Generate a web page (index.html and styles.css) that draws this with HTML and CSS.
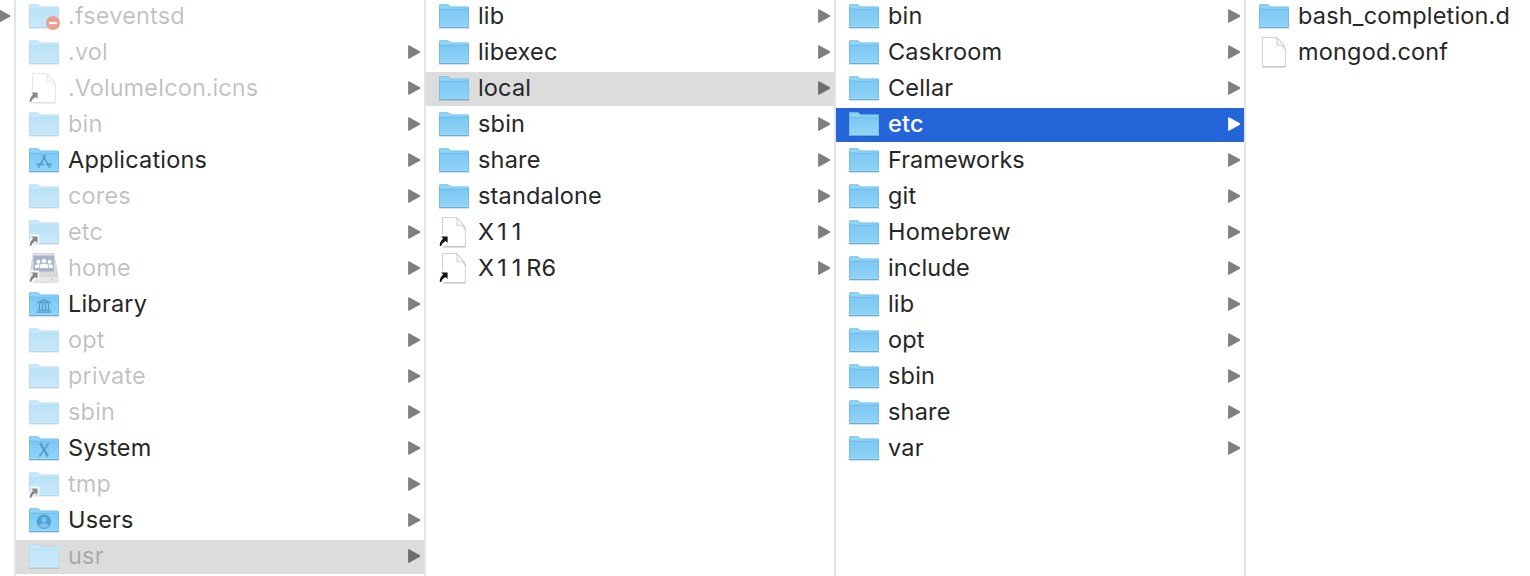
FILE: index.html
```html
<!DOCTYPE html>
<html lang="en">
<head>
<meta charset="utf-8">
<title>usr/local/etc</title>
<link rel="stylesheet" href="styles.css">
</head>
<body>
<svg class="defs" aria-hidden="true">
  <defs>
    <linearGradient id="front" x1="0" y1="0" x2="0" y2="1"><stop offset="0" stop-color="#7bc8f3"/><stop offset="1" stop-color="#92d3f8"/></linearGradient>
    <linearGradient id="drive" x1="0" y1="0" x2="0" y2="1"><stop offset="0" stop-color="#c9cacb"/><stop offset="1" stop-color="#a9abad"/></linearGradient>
    <symbol id="folder" viewBox="0 0 32 34">
      <path d="M1 28.2H31V29H1z" fill="#000" opacity=".12"/>
      <path d="M1 5.2Q1 4.2 2 4.2H9.6Q10.5 4.2 11.1 5L12.3 6.5H30Q31 6.5 31 7.5V27.9H1z" fill="#91d5f7"/>
      <path d="M1 9H31V27.9H1z" fill="url(#front)"/>
      <path d="M1.5 27V5.6Q1.5 4.7 2.4 4.7H9.4Q10.2 4.7 10.8 5.5L12 7H29.6Q30.5 7 30.5 7.9V27" fill="none" stroke="#62afe0" stroke-opacity=".5"/>
      <path d="M1 9.2H31" stroke="#64b4df" stroke-width=".8" opacity=".7"/>
      <path d="M1 26.5H31" stroke="#a2dafa" opacity=".7"/>
      <path d="M1 27.6H31" stroke="#5aa6cf" stroke-width=".9"/>
    </symbol>
    <symbol id="veil" viewBox="0 0 32 34">
      <path d="M1 5.2Q1 4.2 2 4.2H9.6Q10.5 4.2 11.1 5L12.3 6.5H30Q31 6.5 31 7.5V28H1z" fill="#fff" opacity=".52"/>
    </symbol>
    <symbol id="file" viewBox="0 0 32 34">
      <path d="M4.5 1.5H18.3Q21 2.7 23.5 6.2Q26.6 9.5 27.4 13.5V30.5H4.5z" fill="#fff" stroke="#d0d0d0"/>
      <path d="M4.2 31H27.7" stroke="#b5b5b5" stroke-width=".8"/>
      <path d="M18 1.5Q20 4 18.7 9.3Q24.5 8.4 27.4 13.5Q25.8 7.5 18 1.5z" fill="#f6f6f6" stroke="#c4c4c4" stroke-width=".8"/>
    </symbol>
    <symbol id="alias" viewBox="0 0 32 34">
      <path d="M3 19.5H10.2V27L7.6 25Q4.8 27 3.6 31.5L1 29.8Q1.2 25.5 5 22z" fill="#fff" stroke="#fff" stroke-width="2" stroke-linejoin="round"/>
      <path d="M3.2 20.5H9.6V26.9L7.6 25Q4 26.6 2.9 30.3L1.7 29.5Q1.7 25.5 5.2 22.5z" fill="#111318"/>
    </symbol>
    <symbol id="apps" viewBox="0 0 32 34">
      <g fill="none" stroke="#4f9fd2" stroke-width="1.6" stroke-linecap="round"><path d="M17.2 11.7L10.6 23.3M15 11.7L21.7 23.3M9 20.4H15.2M18.8 20.4H23.3"/></g>
    </symbol>
    <symbol id="library" viewBox="0 0 32 34">
      <path d="M9.3 14.2L16 10.7L22.7 14.2V15.5H9.3z" fill="#559fcf"/>
      <path d="M11.5 16V22M14.5 16V22M17.5 16V22M20.5 16V22" stroke="#529ecf" stroke-width="1.3"/>
      <path d="M9.5 22.4H22.5M8.7 24.1H23.3" stroke="#529ecf" stroke-width="1.1"/>
      <circle cx="16" cy="13.5" r=".8" fill="#83caf1"/>
    </symbol>
    <symbol id="system" viewBox="0 0 32 34">
      <path d="M12.2 11.2L20 24.5" stroke="#4f9fd2" stroke-width="2.4"/>
      <path d="M20.6 11.2L11.3 24.5" stroke="#4f9fd2" stroke-width="1.5"/>
    </symbol>
    <symbol id="users" viewBox="0 0 32 34">
      <circle cx="16" cy="17.8" r="7.2" fill="#4ca0d5"/>
      <circle cx="16" cy="15.7" r="2.8" fill="#7cc4ee"/>
      <path d="M10.9 22Q12.2 19.3 16 19.3T21.1 22Q19 24 16 24T10.9 22z" fill="#7cc4ee"/>
    </symbol>
    <symbol id="home" viewBox="0 0 32 34">
      <path d="M5 1.5H26L30 25V29.5Q30 30.5 29 30.5H3Q2 30.5 2 29.5V25z" fill="url(#drive)" stroke="#969696" stroke-width=".7"/>
      <path d="M2.2 25H29.8V29.5Q29.8 30.4 29 30.4H3Q2.2 30.4 2.2 29.5z" fill="#d0d1d1"/>
      <path d="M5.5 3.5H26V17.5Q26 19.6 24 19.6H7.5Q5.5 19.6 5.5 17.5z" fill="#4d6790"/>
      <g fill="#fff"><circle cx="10.4" cy="9.7" r="2"/><circle cx="21.6" cy="9.7" r="2"/><path d="M7 16V14Q7 12.3 10.4 12.3L12.4 13V16zM25 16V14Q25 12.3 21.6 12.3L19.6 13V16z"/></g>
      <g fill="#fff" stroke="#4d6790" stroke-width=".8"><path d="M11.5 16.4V13.8Q11.5 11.3 16 11.3T20.5 13.8V16.4z"/><circle cx="16" cy="9" r="2.6"/></g>
      <circle cx="24" cy="27.5" r="1" fill="#70b957"/>
    </symbol>
    <symbol id="denied" viewBox="0 0 32 34">
      <circle cx="25" cy="23" r="7" fill="#d9412c"/>
      <path d="M21 23H29" stroke="#fff" stroke-width="2.2"/>
    </symbol>
    <symbol id="arrow" viewBox="0 0 12 14">
      <path d="M.7 .8L11.2 6.4Q12 7 11.2 7.6L.7 13.2Z" fill="currentColor" stroke="currentColor" stroke-width="1.1" stroke-linejoin="round"/>
    </symbol>
  </defs>
</svg>
<main class="browser">
  <ul class="column parent"><li class="row"><svg class="arrow"><use href="#arrow"/></svg></li></ul>
  <ul class="column">
    <li class="row dim"><svg class="icon"><use href="#folder"/><use href="#denied"/></svg><span class="name">.fseventsd</span></li>
    <li class="row dim"><svg class="icon"><use href="#folder"/></svg><span class="name">.vol</span><svg class="arrow"><use href="#arrow"/></svg></li>
    <li class="row dim"><svg class="icon"><use href="#file"/><use href="#alias"/></svg><span class="name tight">.VolumeIcon.icns</span><svg class="arrow"><use href="#arrow"/></svg></li>
    <li class="row dim"><svg class="icon"><use href="#folder"/></svg><span class="name">bin</span><svg class="arrow"><use href="#arrow"/></svg></li>
    <li class="row"><svg class="icon"><use href="#folder"/><use href="#apps"/></svg><span class="name">Applications</span><svg class="arrow"><use href="#arrow"/></svg></li>
    <li class="row dim"><svg class="icon"><use href="#folder"/></svg><span class="name">cores</span><svg class="arrow"><use href="#arrow"/></svg></li>
    <li class="row dim"><svg class="icon"><use href="#folder"/><use href="#alias"/></svg><span class="name">etc</span><svg class="arrow"><use href="#arrow"/></svg></li>
    <li class="row dim"><svg class="icon"><use href="#home"/><use href="#alias"/></svg><span class="name">home</span><svg class="arrow"><use href="#arrow"/></svg></li>
    <li class="row"><svg class="icon"><use href="#folder"/><use href="#library"/></svg><span class="name">Library</span><svg class="arrow"><use href="#arrow"/></svg></li>
    <li class="row dim"><svg class="icon"><use href="#folder"/></svg><span class="name">opt</span><svg class="arrow"><use href="#arrow"/></svg></li>
    <li class="row dim"><svg class="icon"><use href="#folder"/></svg><span class="name">private</span><svg class="arrow"><use href="#arrow"/></svg></li>
    <li class="row dim"><svg class="icon"><use href="#folder"/></svg><span class="name">sbin</span><svg class="arrow"><use href="#arrow"/></svg></li>
    <li class="row"><svg class="icon"><use href="#folder"/><use href="#system"/></svg><span class="name">System</span><svg class="arrow"><use href="#arrow"/></svg></li>
    <li class="row dim"><svg class="icon"><use href="#folder"/><use href="#alias"/></svg><span class="name">tmp</span><svg class="arrow"><use href="#arrow"/></svg></li>
    <li class="row"><svg class="icon"><use href="#folder"/><use href="#users"/></svg><span class="name">Users</span><svg class="arrow"><use href="#arrow"/></svg></li>
    <li class="row dim on-path"><svg class="icon"><use href="#folder"/><use href="#veil"/></svg><span class="name">usr</span><svg class="arrow"><use href="#arrow"/></svg></li>
  </ul>
  <ul class="column">
    <li class="row"><svg class="icon"><use href="#folder"/></svg><span class="name">lib</span><svg class="arrow"><use href="#arrow"/></svg></li>
    <li class="row"><svg class="icon"><use href="#folder"/></svg><span class="name">libexec</span><svg class="arrow"><use href="#arrow"/></svg></li>
    <li class="row on-path"><svg class="icon"><use href="#folder"/></svg><span class="name">local</span><svg class="arrow"><use href="#arrow"/></svg></li>
    <li class="row"><svg class="icon"><use href="#folder"/></svg><span class="name">sbin</span><svg class="arrow"><use href="#arrow"/></svg></li>
    <li class="row"><svg class="icon"><use href="#folder"/></svg><span class="name">share</span><svg class="arrow"><use href="#arrow"/></svg></li>
    <li class="row"><svg class="icon"><use href="#folder"/></svg><span class="name">standalone</span><svg class="arrow"><use href="#arrow"/></svg></li>
    <li class="row"><svg class="icon"><use href="#file"/><use href="#alias"/></svg><span class="name">X<span class="ones">11</span></span><svg class="arrow"><use href="#arrow"/></svg></li>
    <li class="row"><svg class="icon"><use href="#file"/><use href="#alias"/></svg><span class="name">X<span class="ones">11</span>R6</span><svg class="arrow"><use href="#arrow"/></svg></li>
  </ul>
  <ul class="column">
    <li class="row"><svg class="icon"><use href="#folder"/></svg><span class="name">bin</span><svg class="arrow"><use href="#arrow"/></svg></li>
    <li class="row"><svg class="icon"><use href="#folder"/></svg><span class="name">Caskroom</span><svg class="arrow"><use href="#arrow"/></svg></li>
    <li class="row"><svg class="icon"><use href="#folder"/></svg><span class="name">Cellar</span><svg class="arrow"><use href="#arrow"/></svg></li>
    <li class="row selected"><svg class="icon"><use href="#folder"/></svg><span class="name">etc</span><svg class="arrow"><use href="#arrow"/></svg></li>
    <li class="row"><svg class="icon"><use href="#folder"/></svg><span class="name tight">Frameworks</span><svg class="arrow"><use href="#arrow"/></svg></li>
    <li class="row"><svg class="icon"><use href="#folder"/></svg><span class="name">git</span><svg class="arrow"><use href="#arrow"/></svg></li>
    <li class="row"><svg class="icon"><use href="#folder"/></svg><span class="name">Homebrew</span><svg class="arrow"><use href="#arrow"/></svg></li>
    <li class="row"><svg class="icon"><use href="#folder"/></svg><span class="name">include</span><svg class="arrow"><use href="#arrow"/></svg></li>
    <li class="row"><svg class="icon"><use href="#folder"/></svg><span class="name">lib</span><svg class="arrow"><use href="#arrow"/></svg></li>
    <li class="row"><svg class="icon"><use href="#folder"/></svg><span class="name">opt</span><svg class="arrow"><use href="#arrow"/></svg></li>
    <li class="row"><svg class="icon"><use href="#folder"/></svg><span class="name">sbin</span><svg class="arrow"><use href="#arrow"/></svg></li>
    <li class="row"><svg class="icon"><use href="#folder"/></svg><span class="name">share</span><svg class="arrow"><use href="#arrow"/></svg></li>
    <li class="row"><svg class="icon"><use href="#folder"/></svg><span class="name">var</span><svg class="arrow"><use href="#arrow"/></svg></li>
  </ul>
  <ul class="column last">
    <li class="row"><svg class="icon"><use href="#folder"/></svg><span class="name">bash_completion.d</span></li>
    <li class="row"><svg class="icon"><use href="#file"/></svg><span class="name">mongod.conf</span></li>
  </ul>
</main>
</body>
</html>
```
FILE: styles.css
```css
* { box-sizing: border-box; }
body { margin: 0; background: #fff; overflow: hidden; }
.defs { position: absolute; width: 0; height: 0; }
.browser {
  display: flex;
  width: 1530px;
  height: 576px;
  overflow: hidden;
  font: 400 23.5px/34px Inter, "Liberation Sans", sans-serif;
  color: #262626;
}
.column {
  display: flex;
  flex-direction: column;
  gap: 2px;
  flex: 0 0 410px;
  min-width: 0;
  margin: 0;
  padding: 0;
  list-style: none;
  border-right: 2px solid #e4e4e4;
}
.column.parent { flex-basis: 16px; align-items: flex-end; overflow: hidden; }
.column.last { flex: 1; border-right: 0; }
.row {
  display: flex;
  align-items: center;
  height: 34px;
  flex: none;
  padding: 0 4px 0 12px;
}
.parent .row { padding-left: 0; }
.icon { width: 32px; height: 34px; flex: none; margin-right: 8px; }
.name { flex: 1; white-space: nowrap; letter-spacing: .17px; margin-bottom: 2px; }
.name.tight { letter-spacing: .03px; }
.ones { letter-spacing: 5px; margin-left: 3px; }
.arrow { width: 12px; height: 14px; flex: none; color: #7f7f7f; margin-bottom: 2px; }
.dim .icon { opacity: .5; }
.dim .name { color: rgba(0, 0, 0, .25); }
.on-path { background: #dcdcdc; }
.on-path .arrow { color: #6e6e6e; }
.dim.on-path .icon { opacity: 1; }
.selected { background: #2465d9; color: #fff; }
.selected .name { font-weight: 500; }
.selected .arrow { color: #fff; }
```
